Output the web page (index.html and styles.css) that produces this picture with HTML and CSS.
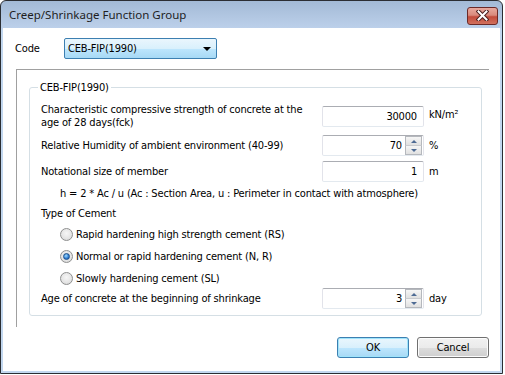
FILE: index.html
```html
<!DOCTYPE html>
<html>
<head>
<meta charset="utf-8">
<link rel="stylesheet" href="styles.css">
</head>
<body>
<div class="window">
  <div class="titlebar">
    <span class="title">Creep/Shrinkage Function Group</span>
    <div class="close">
      <svg width="13" height="11" viewBox="0 0 13 11"><path d="M2.5 1.5 L10.5 9.5 M10.5 1.5 L2.5 9.5" stroke="#4a1e1e" stroke-width="4" stroke-linecap="square"/><path d="M2.5 1.5 L10.5 9.5 M10.5 1.5 L2.5 9.5" stroke="#fff" stroke-width="2" stroke-linecap="square"/></svg>
    </div>
  </div>
  <div class="client">
    <div class="code-row">
      <span class="code-label">Code</span>
      <div class="combo"><span>CEB-FIP(1990)</span><span class="combo-arrow"></span></div>
    </div>
    <div class="outer-group">
      <fieldset class="inner-group">
        <legend>CEB-FIP(1990)</legend>
        <div class="row r1">
          <span class="lbl">Characteristic compressive strength of concrete at the<br>age of 28 days(fck)</span>
          <div class="input"><span class="val">30000</span></div>
          <span class="unit unit-sup">kN/m²</span>
        </div>
        <div class="row r2">
          <span class="lbl">Relative Humidity of ambient environment (40-99)</span>
          <div class="input spin"><span class="val">70</span><div class="spinner"><span class="sb up"></span><span class="sb down"></span></div></div>
          <span class="unit">%</span>
        </div>
        <div class="row r3">
          <span class="lbl">Notational size of member</span>
          <div class="input"><span class="val">1</span></div>
          <span class="unit">m</span>
        </div>
        <div class="formula">h = 2 * Ac / u (Ac : Section Area, u : Perimeter in contact with atmosphere)</div>
        <div class="type">Type of Cement</div>
        <div class="radio"><span class="rb"></span><span>Rapid hardening high strength cement (RS)</span></div>
        <div class="radio"><span class="rb checked"></span><span>Normal or rapid hardening cement (N, R)</span></div>
        <div class="radio"><span class="rb"></span><span>Slowly hardening cement (SL)</span></div>
        <div class="row r4">
          <span class="lbl">Age of concrete at the beginning of shrinkage</span>
          <div class="input spin"><span class="val">3</span><div class="spinner"><span class="sb up"></span><span class="sb down"></span></div></div>
          <span class="unit">day</span>
        </div>
      </fieldset>
    </div>
    <div class="buttons">
      <div class="btn default">OK</div>
      <div class="btn">Cancel</div>
    </div>
  </div>
</div>
</body>
</html>
```
FILE: styles.css
```css
html, body { margin: 0; padding: 0; background: #fff; }
body { width: 505px; height: 375px; overflow: hidden; }

.window {
  width: 503px;
  height: 374px;
  box-sizing: border-box;
  border: 1px solid #2b2e33;
  border-radius: 6px 6px 0 0;
  background: linear-gradient(#a3bad6 0, #bcd0ea 27px, #c2d7ef 28px, #c2d7ef 100%);
  display: flex;
  flex-direction: column;
  overflow: hidden;
  font-family: "DejaVu Sans Condensed", "DejaVu Sans", sans-serif;
  font-size: 11px;
  letter-spacing: -0.17px;
  color: #000;
}

.titlebar {
  height: 27px;
  display: flex;
  align-items: center;
  padding-left: 8px;
  flex: none;
}
.title {
  font-family: "Noto Sans", sans-serif;
  font-size: 11.5px;
  letter-spacing: 0;
  color: #1e1e1e;
}
.close {
  margin-left: auto;
  margin-right: 4px;
  margin-top: 2px;
  width: 29px;
  height: 16px;
  border: 1px solid #6b2a28;
  border-radius: 3px;
  background: linear-gradient(#e8a99e 0, #d98a7c 45%, #c24b3b 55%, #d1715e 100%);
  display: flex;
  align-items: center;
  justify-content: center;
}

.client {
  flex: 1;
  margin: 0 2px 2px 2px;
  background: #fff;
  display: flex;
  flex-direction: column;
}

.code-row {
  display: flex;
  align-items: center;
  margin-top: 10px;
  margin-left: 12px;
}
.code-label { width: 49px; }
.combo {
  width: 153px;
  height: 21px;
  box-sizing: border-box;
  border: 1px solid #3c7fb1;
  border-radius: 2px;
  background: linear-gradient(#eaf6fd 0, #d9f0fc 50%, #bee6fd 51%, #a7d9f5 100%);
  display: flex;
  align-items: center;
  padding-left: 3px;
  padding-right: 5px;
}
.combo-arrow {
  margin-left: auto;
  width: 0;
  height: 0;
  border-left: 4px solid transparent;
  border-right: 4px solid transparent;
  border-top: 4px solid #000;
}

.outer-group {
  margin-top: 10px;
  margin-left: 13px;
  width: 473px;
  height: 258px;
  box-sizing: border-box;
  border-top: 1px solid #a0a0a0;
  border-left: 1px solid #a0a0a0;
}

.inner-group {
  margin: 11px 0 0 12px;
  padding: 0 0 0 11px;
  width: 453px;
  height: 235px;
  box-sizing: border-box;
  border: 1px solid #d5dfe5;
  border-radius: 3px;
  min-width: 0;
}
.inner-group legend {
  padding: 0 2px;
  margin-left: -3px;
  line-height: 13px;
}

.row {
  display: flex;
  align-items: center;
  line-height: 13px;
}
.lbl { white-space: nowrap; width: 281px; flex: none; }
.r1 { margin-top: 9px; }
.r2 { margin-top: 6px; }
.r3 { margin-top: 5px; }
.r4 { margin-top: 2px; }

.input {
  width: 102px;
  flex: none;
  height: 21px;
  box-sizing: border-box;
  border: 1px solid #e2e3ea;
  border-top-color: #abadb3;
  border-bottom-color: #e3e9ef;
  border-radius: 2px;
  display: flex;
  align-items: center;
  justify-content: flex-end;
  padding-right: 6px;
  background: #fff;
}
.input.spin { padding-right: 1px; }
.input.spin .val { margin-right: 3px; }
.spinner {
  width: 17px;
  height: 19px;
  display: flex;
  flex-direction: column;
}
.sb {
  flex: 1;
  box-sizing: border-box;
  border: 1px solid #b5b8bd;
  background: linear-gradient(#f6f6f6, #e0e0e0);
  display: flex;
  align-items: center;
  justify-content: center;
}
.sb.up { border-bottom-color: #c9cbcf; }
.sb.down { border-top: none; }
.sb.up::after {
  content: "";
  border-left: 3px solid transparent;
  border-right: 3px solid transparent;
  border-bottom: 3px solid #4e6b94;
}
.sb.down::after {
  content: "";
  border-left: 3px solid transparent;
  border-right: 3px solid transparent;
  border-top: 3px solid #4e6b94;
}
.unit { margin-left: 5px; }
.unit-sup { margin-top: -3px; }

.formula {
  margin-top: 5px;
  margin-left: 19px;
  line-height: 13px;
  white-space: nowrap;
}
.type {
  margin-top: 7px;
  line-height: 13px;
}
.radio {
  display: flex;
  align-items: center;
  height: 16px;
  margin-top: 6px;
  margin-left: 19px;
  gap: 3px;
}
.rb {
  width: 13px;
  height: 13px;
  box-sizing: border-box;
  border-radius: 50%;
  border: 1px solid #8e8f8f;
  background: radial-gradient(circle at 50% 40%, #f6f6f6 0, #e4e4e4 60%, #cfcfcf 100%);
  display: flex;
  align-items: center;
  justify-content: center;
}
.rb.checked::after {
  content: "";
  width: 5px;
  height: 5px;
  border-radius: 50%;
  border: 1px solid #1b4f8a;
  background: radial-gradient(circle at 40% 35%, #9fdcff 0, #2d7ad0 60%, #1a4f96 100%);
}

.buttons {
  display: flex;
  justify-content: flex-end;
  gap: 8px;
  margin-top: 10px;
  margin-right: 11px;
}
.btn {
  width: 72px;
  height: 21px;
  box-sizing: border-box;
  border: 1px solid #707070;
  border-radius: 3px;
  background: linear-gradient(#f2f2f2 0, #ebebeb 50%, #dddddd 51%, #cfcfcf 100%);
  display: flex;
  align-items: center;
  justify-content: center;
  box-shadow: inset 0 0 0 1px #fcfcfc;
}
.btn.default {
  border-color: #3c7fb1;
  background: linear-gradient(#eaf6fd 0, #d9f0fc 50%, #bee6fd 51%, #a7d9f5 100%);
  box-shadow: inset 0 0 0 1px #9fe4fb;
}
```
